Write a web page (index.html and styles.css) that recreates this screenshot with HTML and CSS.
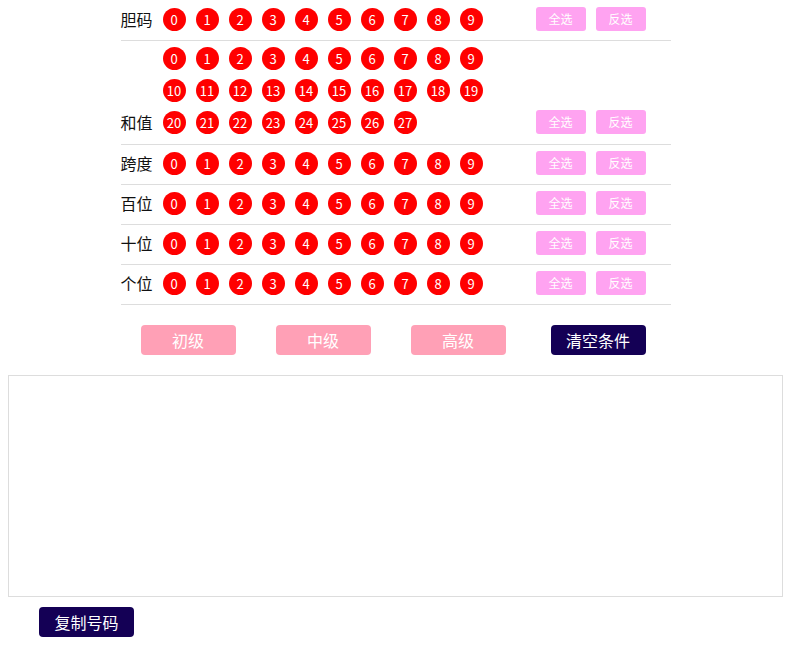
FILE: index.html
```html
<!DOCTYPE html>
<html lang="zh-CN">
<head>
<meta charset="utf-8">
<title>号码筛选</title>
<link rel="stylesheet" href="styles.css">
</head>
<body>
<div class="panel">
  <div class="row">
    <div class="label">胆码</div>
    <div class="balls">
      <span class="ball">0</span><span class="ball">1</span><span class="ball">2</span><span class="ball">3</span><span class="ball">4</span><span class="ball">5</span><span class="ball">6</span><span class="ball">7</span><span class="ball">8</span><span class="ball">9</span>
    </div>
    <div class="ops"><button class="op">全选</button><button class="op">反选</button></div>
  </div>
  <div class="row row--multi">
    <div class="label">和值</div>
    <div class="balls">
      <span class="ball">0</span><span class="ball">1</span><span class="ball">2</span><span class="ball">3</span><span class="ball">4</span><span class="ball">5</span><span class="ball">6</span><span class="ball">7</span><span class="ball">8</span><span class="ball">9</span>
      <span class="ball">10</span><span class="ball">11</span><span class="ball">12</span><span class="ball">13</span><span class="ball">14</span><span class="ball">15</span><span class="ball">16</span><span class="ball">17</span><span class="ball">18</span><span class="ball">19</span>
      <span class="ball">20</span><span class="ball">21</span><span class="ball">22</span><span class="ball">23</span><span class="ball">24</span><span class="ball">25</span><span class="ball">26</span><span class="ball">27</span>
    </div>
    <div class="ops"><button class="op">全选</button><button class="op">反选</button></div>
  </div>
  <div class="row">
    <div class="label">跨度</div>
    <div class="balls">
      <span class="ball">0</span><span class="ball">1</span><span class="ball">2</span><span class="ball">3</span><span class="ball">4</span><span class="ball">5</span><span class="ball">6</span><span class="ball">7</span><span class="ball">8</span><span class="ball">9</span>
    </div>
    <div class="ops"><button class="op">全选</button><button class="op">反选</button></div>
  </div>
  <div class="row">
    <div class="label">百位</div>
    <div class="balls">
      <span class="ball">0</span><span class="ball">1</span><span class="ball">2</span><span class="ball">3</span><span class="ball">4</span><span class="ball">5</span><span class="ball">6</span><span class="ball">7</span><span class="ball">8</span><span class="ball">9</span>
    </div>
    <div class="ops"><button class="op">全选</button><button class="op">反选</button></div>
  </div>
  <div class="row">
    <div class="label">十位</div>
    <div class="balls">
      <span class="ball">0</span><span class="ball">1</span><span class="ball">2</span><span class="ball">3</span><span class="ball">4</span><span class="ball">5</span><span class="ball">6</span><span class="ball">7</span><span class="ball">8</span><span class="ball">9</span>
    </div>
    <div class="ops"><button class="op">全选</button><button class="op">反选</button></div>
  </div>
  <div class="row">
    <div class="label">个位</div>
    <div class="balls">
      <span class="ball">0</span><span class="ball">1</span><span class="ball">2</span><span class="ball">3</span><span class="ball">4</span><span class="ball">5</span><span class="ball">6</span><span class="ball">7</span><span class="ball">8</span><span class="ball">9</span>
    </div>
    <div class="ops"><button class="op">全选</button><button class="op">反选</button></div>
  </div>
  <div class="levels">
    <button class="level">初级</button>
    <button class="level">中级</button>
    <button class="level">高级</button>
    <button class="level level--dark">清空条件</button>
  </div>
</div>
<textarea class="result"></textarea>
<div class="copy-bar"><button class="copy">复制号码</button></div>
</body>
</html>
```

FILE: styles.css
```css
* { box-sizing: border-box; }
body {
  margin: 0 8px;
  font-family: "Microsoft YaHei", "Noto Sans CJK SC", sans-serif;
  color: #111;
  background: #fff;
}
.panel {
  width: 550px;
  margin: 0 auto;
  padding-top: 1px;
}
.row {
  display: flex;
  align-items: flex-end;
  padding: 6px 0 9px;
  border-bottom: 1px solid #ddd;
}
.row--multi { padding-bottom: 10px; }
.label {
  width: 42px;
  font-size: 16px;
  line-height: 23px;
  flex: none;
}
.balls {
  width: 340px;
  display: flex;
  flex-wrap: wrap;
  row-gap: 9px;
}
.ball {
  width: 23px;
  height: 23px;
  margin-right: 10px;
  border-radius: 50%;
  background: #ff0000;
  color: #fff;
  font-size: 13px;
  line-height: 23px;
  text-align: center;
}
.ops {
  margin-left: auto;
  margin-right: 25px;
  display: flex;
  gap: 10px;
}
.op {
  width: 50px;
  height: 24px;
  border: none;
  border-radius: 3px;
  background: #ffa3f1;
  color: #fff;
  font-family: inherit;
  font-size: 12px;
  padding: 0;
  line-height: 24px;
}
.levels {
  display: flex;
  padding-top: 20px;
}
.level {
  width: 95px;
  height: 30px;
  margin: 0 20px;
  border: none;
  border-radius: 4px;
  background: #ffa0b6;
  color: #fff;
  font-family: inherit;
  font-size: 16px;
  padding: 0;
}
.level--dark {
  margin-left: 25px;
  background: #140055;
}
.result {
  display: block;
  width: 100%;
  height: 222px;
  margin-top: 20px;
  border: 1px solid #ddd;
  resize: none;
}
.copy-bar {
  padding: 10px 0 0 31px;
}
.copy {
  width: 95px;
  height: 30px;
  border: none;
  border-radius: 4px;
  background: #140055;
  color: #fff;
  font-family: inherit;
  font-size: 16px;
  padding: 0;
}
```
